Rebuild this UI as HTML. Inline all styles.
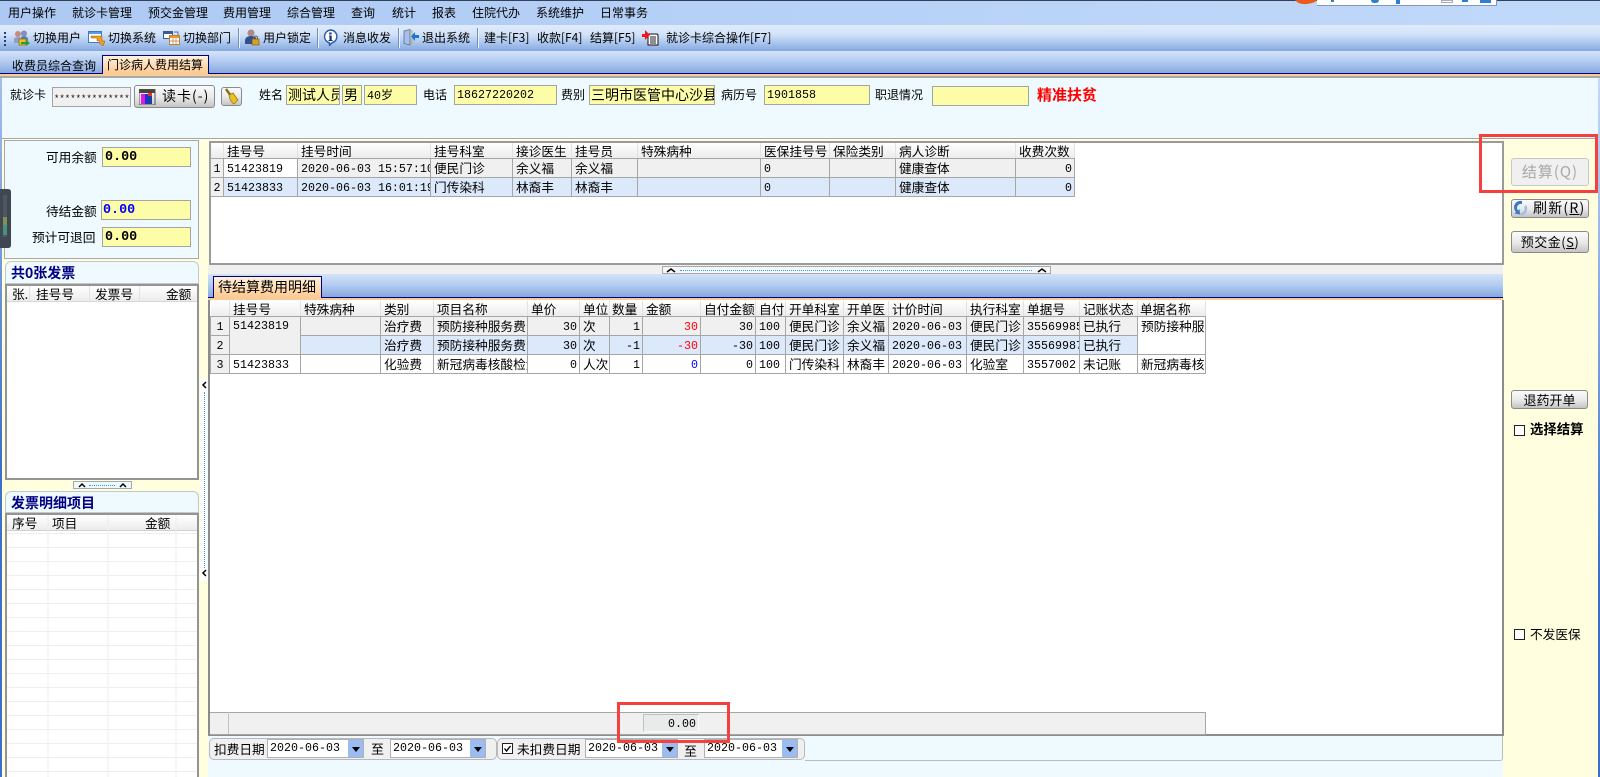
<!DOCTYPE html>
<html lang="zh-CN"><head><meta charset="utf-8"><title>门诊病人费用结算</title>
<style>
html,body{margin:0;padding:0;width:1600px;height:777px;overflow:hidden;background:#ffffe0}
body{position:relative;font:12px/16px "WenQuanYi Zen Hei","Noto Sans CJK SC",sans-serif;color:#000}
div,span.t,svg,table{position:absolute}
.t{position:absolute;white-space:nowrap}
.m{font-family:"Liberation Mono","WenQuanYi Zen Hei",monospace;font-size:11.67px}
.y{background:#fdfda8;border:1px solid #a4a4a4;box-sizing:border-box;overflow:hidden;white-space:nowrap;padding-left:2px}
.b{font-family:"Liberation Mono",monospace;font-weight:bold;font-size:13.4px;line-height:20px}
.btn{background:linear-gradient(#fbfbfb,#e8e8e8 55%,#c4c4c4);border:1px solid #8a8a8a;border-radius:3px;box-sizing:border-box;text-align:center;white-space:nowrap}
.sep{width:1px;height:20px;top:28px;background:#6f8fc0;border-right:1px solid #eef4fc}
.title{background:#eefaff;border:1px solid #c0c8cc;border-radius:6px 6px 0 0;box-sizing:border-box;color:#000080;font-weight:bold;font-size:14px;line-height:22px;padding-left:5px}
table{border-collapse:collapse;table-layout:fixed;font-size:12.7px;line-height:15px}
td,th{overflow:hidden;white-space:nowrap;padding:0 0 0 3px;font-weight:normal;text-align:left}
td{border:1px solid #a6a6a6;height:18px;box-sizing:border-box;padding-bottom:2px}
th{height:15px;background:linear-gradient(#fff,#ececec);border-right:1px solid #e2e2e2;border-bottom:1px solid #a6a6a6;box-sizing:border-box}
td.n{font-family:"Liberation Mono",monospace;font-size:11.67px;padding-bottom:0;padding-top:2px}
td.r{text-align:right;padding:2px 2px 0 0;font-family:"Liberation Mono",monospace;font-size:11.67px}
.g td{background:#f0f0f0}.u td{background:#dce9fb}.w td{background:#fff}
td.i{background:#f0f0f0;text-align:center;padding:2px 0 0;font-family:"Liberation Mono",monospace;font-size:11.67px}
td.a{background:#f0f0f0!important}
td.wh{background:#fff!important}
.date{background:#fff;border:1px solid #b0b0b0;box-sizing:border-box;height:19px;top:739px;font-family:"Liberation Mono",monospace;font-size:11.67px;line-height:17px;padding-left:2px;white-space:nowrap;overflow:hidden}
.date:after{content:"";position:absolute;right:0;top:0;width:15px;height:17px;background:#9bbcf2}
.date:before{content:"";position:absolute;z-index:1;right:3px;top:7px;border:4.5px solid transparent;border-top:5px solid #000;border-bottom:0}
.cb{background:#fff;border:1px solid #222;box-sizing:border-box;width:11px;height:11px}
.red{border:3px solid #f54040;box-sizing:border-box}
.dot{border-top:1px dotted #2f9cf0}
</style></head><body>

<!-- menu -->
<div style="left:0;top:0;width:1600px;height:25px;background:linear-gradient(90deg,#adc9f3,#b8d2f7 55%,#c1d9f9)"></div>
<div style="left:0;top:0;width:1600px;height:1px;background:#33415a"></div>
<div style="left:1317px;top:0;width:180px;height:6px;background:#fff;border-bottom:1px solid #7f97bd;border-right:1px solid #7f97bd;box-sizing:border-box"></div>
<svg style="left:1293px;top:0" width="26" height="6"><path d="M2 0Q6 5 14 4T24 0Z" fill="#ee5a18"/></svg>
<div style="left:1331px;top:0;width:3px;height:2px;background:#2f7fd0"></div>
<div style="left:1371px;top:0;width:8px;height:3px;background:#2f7fd0;border-radius:0 0 4px 4px"></div>
<div style="left:1396px;top:0;width:4px;height:4px;background:#2f7fd0"></div>
<div style="left:1441px;top:0;width:12px;height:3px;border:1px solid #aab;box-sizing:border-box"></div>
<div style="left:1462px;top:0;width:6px;height:2px;background:#2f7fd0"></div>
<div style="left:1480px;top:0;width:11px;height:3px;background:#2f7fd0"></div>
<span class="t" style="left:8px;top:5px">用户操作</span>
<span class="t" style="left:72px;top:5px">就诊卡管理</span>
<span class="t" style="left:148px;top:5px">预交金管理</span>
<span class="t" style="left:223px;top:5px">费用管理</span>
<span class="t" style="left:287px;top:5px">综合管理</span>
<span class="t" style="left:351px;top:5px">查询</span>
<span class="t" style="left:392px;top:5px">统计</span>
<span class="t" style="left:432px;top:5px">报表</span>
<span class="t" style="left:472px;top:5px">住院代办</span>
<span class="t" style="left:536px;top:5px">系统维护</span>
<span class="t" style="left:600px;top:5px">日常事务</span>

<!-- toolbar -->
<div style="left:0;top:25px;width:1600px;height:26px;background:linear-gradient(#dfebfb,#d3e3f8 35%,#a9c5ee 70%,#86a8de);border-bottom:1px solid #3d68a8;box-sizing:content-box"></div>
<svg style="left:4px;top:32px" width="3" height="14"><path d="M0 0h2v2H0zM0 4h2v2H0zM0 8h2v2H0zM0 12h2v2H0z" fill="#1f3f80"/></svg>
<svg style="left:13px;top:30px" width="17" height="17"><circle cx="5" cy="4" r="3" fill="#c98a80"/><circle cx="11" cy="3.500" r="3" fill="#7f8fc0"/><path d="M1 13V9q1-2 4-2t4 2v4z" fill="#8f9fc8"/><path d="M8 10V7q1-1 3-1t4 2v3z" fill="#5f7fb8"/><rect x="6" y="9" width="7" height="6" fill="#f0c020" stroke="#806000" stroke-width=".6"/><path d="M8 12h5V10l4 3-4 3v-2H8z" fill="#28a028"/></svg>
<span class="t" style="left:33px;top:30px">切换用户</span>
<svg style="left:88px;top:30px" width="17" height="17"><rect x=".5" y="1.500" width="13" height="11" fill="#fff" stroke="#3a7ac8"/><rect x="1" y="2" width="12" height="2" fill="#5a9ae0"/><path d="M3 8h6v3h3l-1 2 4 3 2-5h-3V6H3z" fill="#f0a020" stroke="#a05a10" stroke-width=".5"/></svg>
<span class="t" style="left:108px;top:30px">切换系统</span>
<svg style="left:163px;top:29px" width="17" height="17"><rect x=".5" y="2.500" width="9" height="7" fill="#fff" stroke="#3a5a98"/><rect x="1" y="3" width="8" height="2" fill="#3a5a98"/><rect x="6.500" y="6.500" width="10" height="9" fill="#fff" stroke="#c08030"/><path d="M7 7h9v2H7z" fill="#e89a30"/><path d="M7 12h9M10 9v6M13 9v6" stroke="#c08030" stroke-width=".7"/><path d="M11 3h4v3" stroke="#3a7ac8" fill="none"/></svg>
<span class="t" style="left:183px;top:30px">切换部门</span>
<div class="sep" style="left:238px"></div>
<svg style="left:244px;top:29px" width="16" height="17"><circle cx="7" cy="4" r="3.500" fill="#b08888"/><path d="M1 15v-4q1-4 6-4t6 4v4z" fill="#30508f"/><rect x="8" y="10" width="7" height="6" fill="#d8a020" stroke="#705010" stroke-width=".6"/><path d="M9.500 10V8q2-2 4 0v2" fill="none" stroke="#666"/></svg>
<span class="t" style="left:263px;top:30px">用户锁定</span>
<div class="sep" style="left:317px"></div>
<svg style="left:323px;top:29px" width="15" height="17"><path d="M7.500 1A6.500 6.500 0 0 1 9 13.800L6.500 16.500V13.800A6.500 6.500 0 0 1 7.500 1Z" fill="#fff" stroke="#2a5aa8" stroke-width="1.400"/><path d="M6.200 3.500h2.400v2H6.200zM6 6.500h2.700v4.500h1v1H5.500v-1h1V7.500H6z" fill="#15356f"/></svg>
<span class="t" style="left:343px;top:30px">消息收发</span>
<div class="sep" style="left:398px"></div>
<svg style="left:403px;top:29px" width="16" height="17"><path d="M1 2l6-1.500V16L1 14.500z" fill="#a8c0e8" stroke="#5070a0" stroke-width=".8"/><path d="M7 2h2v12H7" fill="none" stroke="#d0a050"/><path d="M16 6h-4V3l-4 4.500 4 4.500V9h4z" fill="#1878e0"/></svg>
<span class="t" style="left:422px;top:30px">退出系统</span>
<div class="sep" style="left:477px"></div>
<span class="t" style="left:484px;top:30px">建卡[F3]</span>
<span class="t" style="left:537px;top:30px">收款[F4]</span>
<span class="t" style="left:590px;top:30px">结算[F5]</span>
<svg style="left:642px;top:29px" width="17" height="17"><path d="M6 5h9l1 1v10H6z" fill="#fff" stroke="#111"/><path d="M8 8h6M8 10h6M8 12h6M8 14h6" stroke="#222"/><path d="M0 5h3V1l5 5-5 5V8H0z" fill="#f01818"/></svg>
<span class="t" style="left:666px;top:30px">就诊卡综合操作[F7]</span>

<!-- tab strip -->
<div style="left:0;top:51px;width:1600px;height:22px;background:linear-gradient(#d4e3f9,#b4cdf2 45%,#88a9e0)"></div>
<div style="left:0;top:73px;width:1600px;height:1px;background:#000080"></div>
<div style="left:0;top:74px;width:1600px;height:2px;background:#f4cd9a"></div>
<div style="left:0;top:76px;width:1600px;height:2px;background:#a8a8a8"></div>
<span class="t" style="left:12px;top:58px">收费员综合查询</span>
<div style="left:102px;top:55px;width:107px;height:19px;background:linear-gradient(#fff2dc,#fdc88e);border:1px solid #000080;border-bottom:0;box-sizing:border-box"></div>
<span class="t" style="left:107px;top:57px">门诊病人费用结算</span>

<!-- patient panel -->
<div style="left:0;top:78px;width:1600px;height:60px;background:#eefaff;border-bottom:1px solid #a8a8a8"></div>
<span class="t" style="left:10px;top:87px">就诊卡</span>
<div class="y" style="left:52px;top:87px;width:79px;height:20px;background:#f0f0f0;font:9px/23px 'Liberation Mono',monospace;padding-left:1px">**************</div>
<div class="btn" style="left:134px;top:85px;width:81px;height:23px"></div>
<svg style="left:139px;top:89px" width="17" height="16"><rect x="0" y="0" width="16" height="4" fill="#444"/><rect x="0" y="0" width="16" height="16" fill="none" stroke="#555"/><rect x="2" y="5" width="4" height="10" fill="#e018e0"/><rect x="6" y="5" width="3" height="10" fill="#2030d0"/><rect x="9" y="4" width="4" height="3" fill="#f03020"/><rect x="9" y="7" width="4" height="8" fill="#1840a0"/></svg>
<span class="t" style="left:162px;top:88px;font-size:14px;letter-spacing:1px">读卡(-)</span>
<div class="btn" style="left:221px;top:87px;width:21px;height:19px"></div>
<svg style="left:223px;top:88px" width="17" height="17"><path d="M3 1l5 7" stroke="#8a6a20" stroke-width="2.400"/><path d="M6 7l4-2 5 7-4 4q-4-2-5-9z" fill="#e8c020" stroke="#907010" stroke-width=".7"/></svg>
<span class="t" style="left:259px;top:87px">姓名</span>
<div class="y" style="left:286px;top:85px;width:54px;height:20px;font-size:14px;line-height:18px;padding-left:1px">测试人员</div>
<div class="y" style="left:342px;top:85px;width:20px;height:20px;font-size:14px;line-height:18px;padding-left:1px">男</div>
<div class="y" style="left:364px;top:85px;width:53px;height:20px;line-height:18px"><span class="m">40</span>岁</div>
<span class="t" style="left:423px;top:87px">电话</span>
<div class="y m" style="left:454px;top:85px;width:103px;height:20px;line-height:18px">18627220202</div>
<span class="t" style="left:561px;top:87px">费别</span>
<div class="y" style="left:589px;top:85px;width:126px;height:20px;font-size:14px;line-height:18px;padding-left:1px">三明市医管中心沙县</div>
<span class="t" style="left:721px;top:87px">病历号</span>
<div class="y m" style="left:764px;top:85px;width:106px;height:20px;line-height:18px">1901858</div>
<span class="t" style="left:875px;top:87px">职退情况</span>
<div class="y" style="left:932px;top:86px;width:97px;height:20px"></div>
<span class="t" style="left:1037px;top:87px;color:#f00;font-weight:bold;font-size:15px">精准扶贫</span>

<!-- edges -->
<div style="left:0;top:78px;width:2px;height:699px;background:linear-gradient(#a4bfea,#3f6fc8 55%)"></div>
<div style="left:1598px;top:78px;width:2px;height:699px;background:linear-gradient(#c4daf8,#3f6fc8 70%)"></div>

<!-- left info panel -->
<div style="left:4px;top:140px;width:195px;height:119px;background:#eefaff;border:1px solid #a8a8a8;box-sizing:border-box"></div>
<span class="t" style="left:46px;top:149px;font-size:12.700px">可用余额</span>
<div class="y b" style="left:102px;top:147px;width:89px;height:20px">0.00</div>
<span class="t" style="left:46px;top:203px;font-size:12.700px">待结金额</span>
<div class="y b" style="left:101px;top:200px;width:90px;height:20px;color:#0000ff;padding-left:1px">0.00</div>
<span class="t" style="left:32px;top:229px;font-size:12.700px">预计可退回</span>
<div class="y b" style="left:102px;top:227px;width:89px;height:20px">0.00</div>

<svg style="left:0;top:189px" width="11" height="59"><path d="M0 0H8Q11 0 11 3V56Q11 59 8 59H0z" fill="#3f4852"/>
<path d="M3 7h4M3 9h4M3 11h4M3 13h4M3 15h4M3 17h4M3 19h4M3 21h4M3 23h4M3 25h4M3 27h4" stroke="#5c646c"/>
<path d="M3 29h4M3 31h4M3 33h4M3 35h4" stroke="#c4d850"/><path d="M3 37h4M3 39h4M3 41h4M3 43h4M3 45h4" stroke="#50d8b0"/><path d="M3 47h4" stroke="#5c646c"/></svg>

<!-- invoice panel -->
<div class="title" style="left:5px;top:261px;width:194px;height:23px">共0张发票</div>
<div style="left:5px;top:284px;width:194px;height:196px;background:#fff;border:2px solid #949494;box-sizing:border-box"></div>
<div style="left:7px;top:286px;width:190px;height:16px;background:linear-gradient(#fff,#ececec);border-bottom:1px solid #d8d8d8;box-sizing:border-box"></div>
<div style="left:29px;top:286px;width:1px;height:15px;background:#e2e2e2"></div>
<div style="left:89px;top:286px;width:1px;height:15px;background:#e2e2e2"></div>
<div style="left:139px;top:286px;width:1px;height:15px;background:#e2e2e2"></div>
<span class="t" style="left:12px;top:286px;font-size:12.700px">张.</span>
<span class="t" style="left:36px;top:286px;font-size:12.700px">挂号号</span>
<span class="t" style="left:95px;top:286px;font-size:12.700px">发票号</span>
<span class="t" style="left:166px;top:286px;font-size:12.700px">金额</span>

<div style="left:73px;top:481px;width:59px;height:8px;background:#eefaff;border:1px solid #a8a8a8;box-sizing:border-box"></div>
<svg style="left:73px;top:481px" width="59" height="8"><path d="M6 6l3-3 3 3M47 6l3-3 3 3" fill="none" stroke="#000" stroke-width="1.500"/></svg>
<div class="dot" style="left:89px;top:485px;width:26px"></div>

<div class="title" style="left:5px;top:491px;width:194px;height:22px">发票明细项目</div>
<div style="left:5px;top:513px;width:194px;height:270px;background:#fff;border:2px solid #949494;box-sizing:border-box"></div>
<div style="left:7px;top:515px;width:190px;height:16px;background:linear-gradient(#fff,#ececec);border-bottom:1px solid #d0d0d0;box-sizing:border-box"></div>
<span class="t" style="left:12px;top:515px;font-size:12.700px">序号</span>
<span class="t" style="left:52px;top:515px;font-size:12.700px">项目</span>
<span class="t" style="left:145px;top:515px;font-size:12.700px">金额</span>
<svg style="left:7px;top:515px" width="190" height="262"><path d="M41 0V262M101 0V262M169 0V262" stroke="#eeeeee"/><path d="M0 18.500H190M0 32.500H190M0 46.500H190M0 60.500H190M0 74.500H190M0 88.500H190M0 102.500H190M0 116.500H190M0 130.500H190M0 144.500H190M0 158.500H190M0 172.500H190M0 186.500H190M0 200.500H190M0 214.500H190M0 228.500H190M0 242.500H190M0 256.500H190" stroke="#eeeeee"/></svg>

<!-- vertical splitter -->
<div style="left:200px;top:378px;width:8px;height:202px;background:#fff"></div>
<div style="left:204px;top:392px;width:0;height:176px;border-left:1px dotted #2f9cf0"></div>
<svg style="left:200px;top:378px" width="8" height="14"><path d="M6 4L3 7l3 3" fill="none" stroke="#000" stroke-width="1.500"/></svg>
<svg style="left:200px;top:567px" width="8" height="14"><path d="M6 3L3 6l3 3" fill="none" stroke="#000" stroke-width="1.500"/></svg>

<!-- main top box -->
<div style="left:209px;top:141px;width:1295px;height:124px;background:#fff;border:2px solid #9a9a9a;box-sizing:border-box"></div>
<table style="left:210px;top:143px;width:864px">
<colgroup><col style="width:13px"><col style="width:74px"><col style="width:133px"><col style="width:82px"><col style="width:59px"><col style="width:66px"><col style="width:123px"><col style="width:69px"><col style="width:66px"><col style="width:120px"><col style="width:59px"></colgroup>
<tr><th></th><th>挂号号</th><th>挂号时间</th><th>挂号科室</th><th>接诊医生</th><th>挂号员</th><th>特殊病种</th><th>医保挂号号</th><th>保险类别</th><th>病人诊断</th><th>收费次数</th></tr>
<tr class="g" style="height:19px"><td class="i">1</td><td class="n wh">51423819</td><td class="n">2020-06-03 15:57:10</td><td>便民门诊</td><td>余义福</td><td>余义福</td><td></td><td class="n">0</td><td></td><td>健康查体</td><td class="r">0</td></tr>
<tr class="u" style="height:19px"><td class="i">2</td><td class="n">51423833</td><td class="n">2020-06-03 16:01:19</td><td>门传染科</td><td>林裔丰</td><td>林裔丰</td><td></td><td class="n">0</td><td></td><td>健康查体</td><td class="r">0</td></tr>
</table>

<!-- horizontal splitter -->
<div style="left:208px;top:265px;width:1295px;height:9px;background:#f0f0f0"></div>
<div style="left:662px;top:266px;width:389px;height:8px;background:#f4f8fb;border:1px solid #a8a8a8;box-sizing:border-box"></div>
<svg style="left:662px;top:266px" width="389" height="8"><path d="M5 6l4-3 4 3M376 6l4-3 4 3" fill="none" stroke="#000" stroke-width="1.500"/></svg>
<div class="dot" style="left:680px;top:270px;width:352px"></div>

<!-- tab 2 -->
<div style="left:208px;top:274px;width:1295px;height:23px;background:linear-gradient(#d4e3f9,#b4cdf2 45%,#88a9e0)"></div>
<div style="left:208px;top:297px;width:1295px;height:1px;background:#000080"></div>
<div style="left:208px;top:298px;width:1295px;height:2px;background:#f4cd9a"></div>
<div style="left:213px;top:276px;width:109px;height:22px;background:linear-gradient(#fff2dc,#fdc88e);border:1px solid #000080;border-bottom:0;box-sizing:border-box"></div>
<span class="t" style="left:218px;top:279px;font-size:14px">待结算费用明细</span>

<!-- main lower box -->
<div style="left:208px;top:300px;width:1296px;height:436px;background:#fff;border:solid #8c8c8c;border-width:0 2px 2px 2px;box-sizing:border-box"></div>
<table style="left:210px;top:301px;width:995px">
<colgroup><col style="width:19px"><col style="width:71px"><col style="width:80px"><col style="width:53px"><col style="width:94px"><col style="width:52px"><col style="width:30px"><col style="width:33px"><col style="width:58px"><col style="width:55px"><col style="width:30px"><col style="width:58px"><col style="width:45px"><col style="width:78px"><col style="width:57px"><col style="width:56px"><col style="width:58px"><col style="width:68px"></colgroup>
<tr><th></th><th>挂号号</th><th>特殊病种</th><th>类别</th><th>项目名称</th><th>单价</th><th>单位</th><th style="padding-left:2px">数量</th><th>金额</th><th style="padding-left:3px">自付金额</th><th>自付</th><th>开单科室</th><th>开单医</th><th>计价时间</th><th>执行科室</th><th>单据号</th><th>记账状态</th><th style="padding-left:2px">单据名称</th></tr>
<tr class="g" style="height:19px"><td class="i">1</td><td class="n a" rowspan="2" style="vertical-align:top;padding-top:2px">51423819</td><td></td><td>治疗费</td><td>预防接种服务费</td><td class="r">30</td><td>次</td><td class="r">1</td><td class="r" style="color:#f00">30</td><td class="r">30</td><td class="n">100</td><td>便民门诊</td><td>余义福</td><td class="n">2020-06-03</td><td>便民门诊</td><td class="n">35569985</td><td>已执行</td><td class="wh" rowspan="2" style="vertical-align:top;padding-top:1px">预防接种服务费</td></tr>
<tr class="u" style="height:19px"><td class="i">2</td><td></td><td>治疗费</td><td>预防接种服务费</td><td class="r">30</td><td>次</td><td class="r">-1</td><td class="r" style="color:#f00">-30</td><td class="r">-30</td><td class="n">100</td><td>便民门诊</td><td>余义福</td><td class="n">2020-06-03</td><td>便民门诊</td><td class="n">35569987</td><td>已执行</td></tr>
<tr class="w" style="height:19px"><td class="i">3</td><td class="n">51423833</td><td></td><td>化验费</td><td>新冠病毒核酸检测</td><td class="r">0</td><td>人次</td><td class="r">1</td><td class="r" style="color:#00f">0</td><td class="r">0</td><td class="n">100</td><td>门传染科</td><td>林裔丰</td><td class="n">2020-06-03</td><td>化验室</td><td class="n">3557002</td><td>未记账</td><td>新冠病毒核酸检测</td></tr>
</table>

<!-- footer -->
<div style="left:210px;top:712px;width:996px;height:23px;background:#f0f0f0;border:solid #a6a6a6;border-width:1px 1px 1px 0;box-sizing:border-box"></div>
<div style="left:228px;top:712px;width:1px;height:22px;background:#c4c4c4"></div>
<div class="m" style="left:643px;top:714px;width:56px;height:18px;background:#e9ebeb;border:1px solid;border-color:#c0c0c0 #fafafa #fafafa #c0c0c0;box-sizing:border-box;text-align:right;padding-right:2px;line-height:18px">0.00</div>

<!-- date bar -->
<div style="left:208px;top:736px;width:1295px;height:41px;background:#eefaff"></div>
<div style="left:805px;top:736px;width:698px;height:25px;border:solid #bcbcbc;border-width:0 1px 1px 0;border-radius:0 0 3px 0;box-sizing:border-box"></div>
<div style="left:209px;top:738px;width:288px;height:22px;background:#f0f0f0;border:1px solid #b8b8b8;border-radius:5px;box-sizing:border-box"></div>
<div style="left:497px;top:738px;width:308px;height:22px;background:#f0f0f0;border:1px solid #b8b8b8;border-radius:5px;box-sizing:border-box"></div>
<span class="t" style="left:214px;top:741px;font-size:12.700px">扣费日期</span>
<div class="date" style="left:267px;width:97px">2020-06-03</div>
<span class="t" style="left:371px;top:741px;font-size:13px">至</span>
<div class="date" style="left:390px;width:96px">2020-06-03</div>
<div class="cb" style="left:502px;top:743px"></div>
<svg style="left:502px;top:743px" width="11" height="11"><path d="M2.500 5.500l2 2.500 4-5" fill="none" stroke="#000" stroke-width="1.400"/></svg>
<span class="t" style="left:517px;top:741px;font-size:12.700px">未扣费日期</span>
<div class="date" style="left:585px;width:93px">2020-06-03</div>
<span class="t" style="left:684px;top:743px;font-size:13px">至</span>
<div class="date" style="left:704px;width:94px">2020-06-03</div>

<!-- right side -->
<div class="btn" style="left:1511px;top:158px;width:78px;height:28px;background:#f0f0f0;border-color:#c8c8c8;color:#a8a8a8;font-size:15px;line-height:26px;letter-spacing:1px">结算(Q)</div>
<div class="btn" style="left:1511px;top:199px;width:78px;height:19px"></div>
<svg style="left:1513px;top:200px" width="15" height="16"><path d="M9 1A6.500 6.500 0 0 0 3 12L1.500 13.500 7 14.500 6.500 9 5 10.500A4 4 0 0 1 9 4z" fill="#3878c8"/><path d="M6 15a6.500 6.500 0 0 0 7-10l-2 2a4 4 0 0 1-3 6z" fill="#9cc0ea"/></svg>
<span class="t" style="left:1533px;top:200px;font-size:14px;letter-spacing:1.200px">刷新(<u>R</u>)</span>
<div class="btn" style="left:1511px;top:231px;width:78px;height:22px;font-size:13px;line-height:20px;letter-spacing:.5px">预交金(<u>S</u>)</div>
<div class="btn" style="left:1511px;top:390px;width:77px;height:19px;font-size:13px;line-height:17px">退药开单</div>
<div class="cb" style="left:1514px;top:425px"></div>
<span class="t" style="left:1530px;top:420px;font-size:13.400px;font-weight:bold">选择结算</span>
<div class="cb" style="left:1514px;top:629px"></div>
<span class="t" style="left:1530px;top:626px;font-size:12.700px">不发医保</span>

<!-- annotations -->
<div class="red" style="left:1479px;top:134px;width:119px;height:59px"></div>
<div class="red" style="left:617px;top:702px;width:113px;height:41px"></div>
</body></html>
